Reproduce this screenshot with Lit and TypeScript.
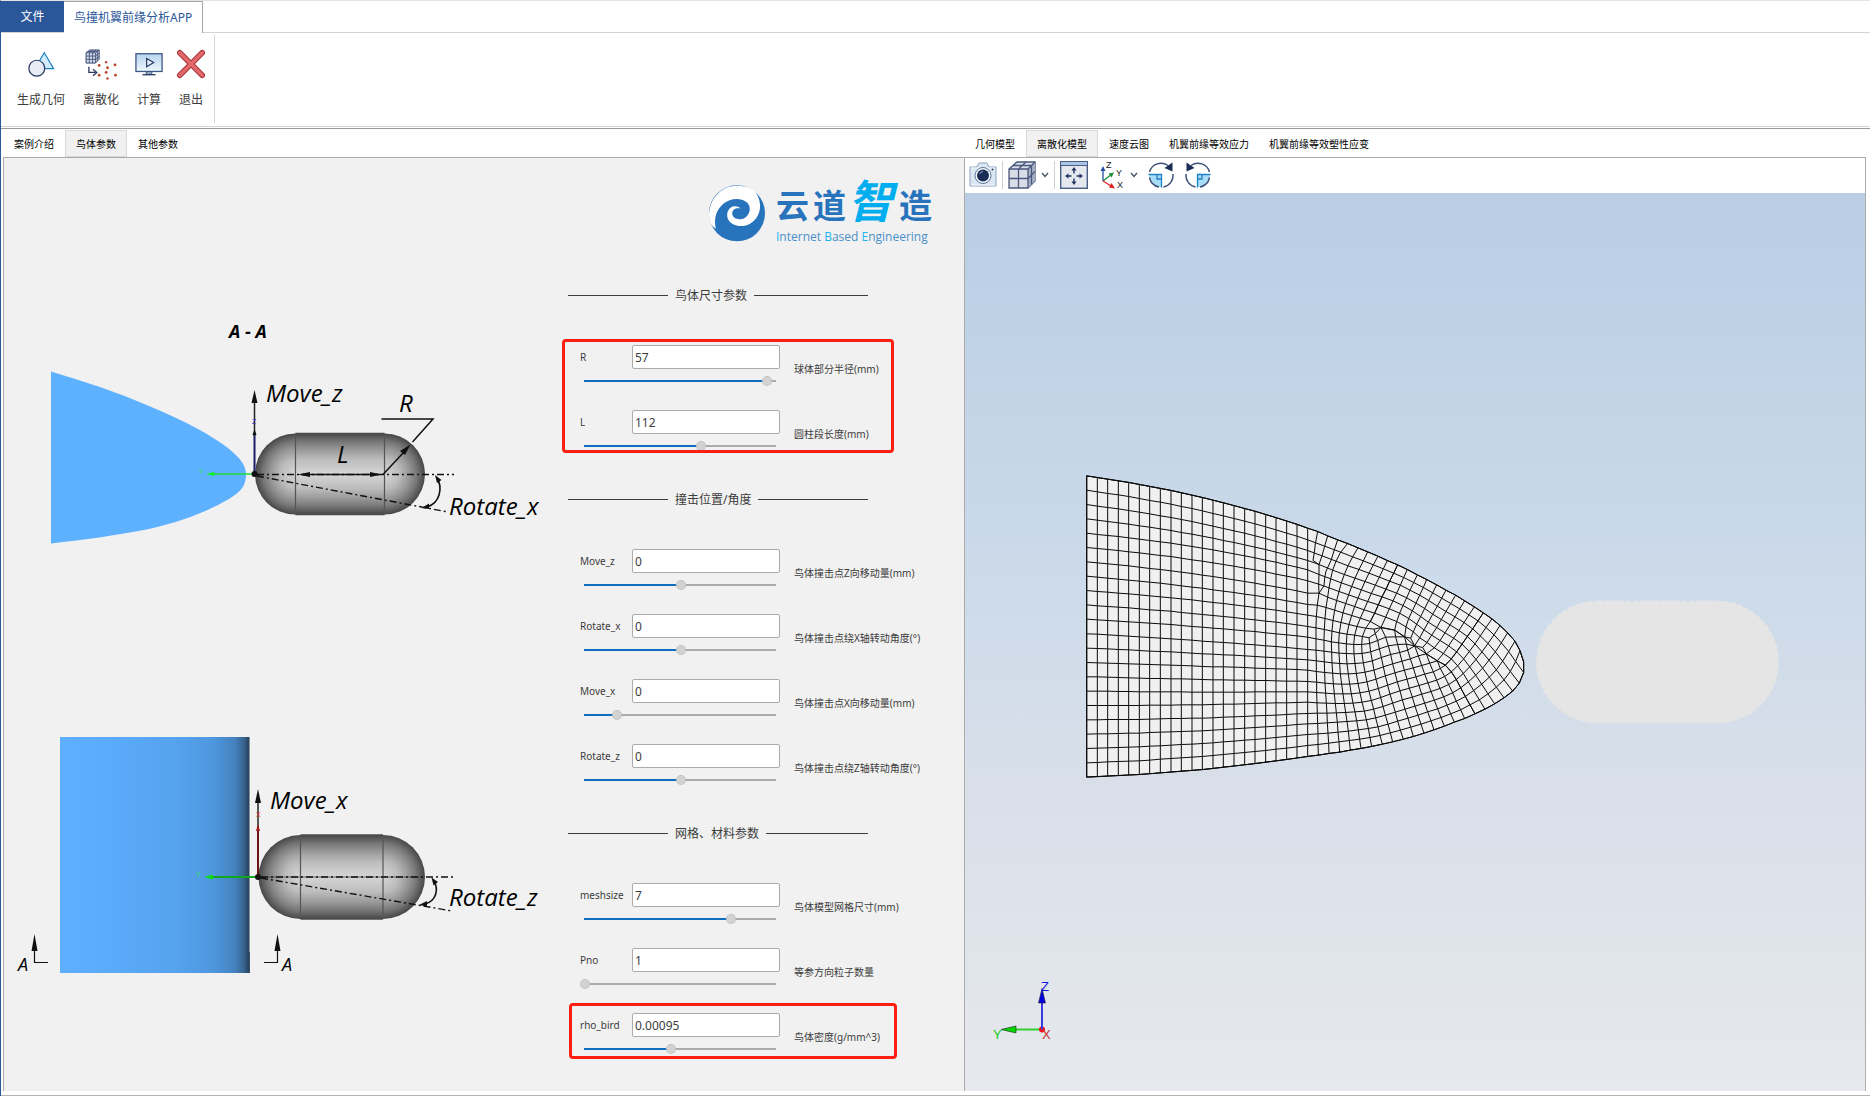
import { LitElement, html, svg, css } from "lit";
import { customElement, property, state } from "lit/decorators.js";

type Pt = [number, number];

interface Param {
  id: string;
  value: number;
  text: string;
  min: number;
  max: number;
  desc: string;
}

interface Section {
  title: string;
  marked?: boolean;
  params: Param[];
}

const SECTIONS: Section[] = [
  {
    title: "鸟体尺寸参数",
    marked: true,
    params: [
      { id: "R", value: 57, text: "57", min: 11, max: 59, desc: "球体部分半径(mm)" },
      { id: "L", value: 112, text: "112", min: 2, max: 182, desc: "圆柱段长度(mm)" },
    ],
  },
  {
    title: "撞击位置/角度",
    params: [
      { id: "Move_z", value: 0, text: "0", min: -51, max: 50, desc: "鸟体撞击点Z向移动量(mm)" },
      { id: "Rotate_x", value: 0, text: "0", min: -51, max: 50, desc: "鸟体撞击点绕X轴转动角度(°)" },
      { id: "Move_x", value: 0, text: "0", min: -20, max: 99, desc: "鸟体撞击点X向移动量(mm)" },
      { id: "Rotate_z", value: 0, text: "0", min: -51, max: 50, desc: "鸟体撞击点绕Z轴转动角度(°)" },
    ],
  },
  {
    title: "网格、材料参数",
    params: [
      { id: "meshsize", value: 7, text: "7", min: 1, max: 8.8, desc: "鸟体模型网格尺寸(mm)" },
      { id: "Pno", value: 1, text: "1", min: 1, max: 5, desc: "等参方向粒子数量" },
      { id: "rho_bird", value: 0.00095, text: "0.00095", min: 0.0005, max: 0.0015, desc: "鸟体密度(g/mm^3)" },
    ],
  },
];

/* ---------- wing mesh ---------- */

const lerp = (a: number, b: number, t: number) => a + (b - a) * t;
const mix = (a: Pt, b: Pt, t: number): Pt => [lerp(a[0], b[0], t), lerp(a[1], b[1], t)];
const divide = (a: Pt, b: Pt, n: number): Pt[] => Array.from({ length: n + 1 }, (_, i) => mix(a, b, i / n));

/** Piecewise linear lookup of y at x. */
function at(pts: Pt[], x: number): number {
  for (let i = 1; i < pts.length; i++) {
    if (x <= pts[i][0]) {
      const [x0, y0] = pts[i - 1];
      const [x1, y1] = pts[i];
      return lerp(y0, y1, (x - x0) / (x1 - x0));
    }
  }
  return pts[pts.length - 1][1];
}

const line = (pts: Pt[]) => "M" + pts.map((p) => `${Math.round(p[0])} ${Math.round(p[1])}`).join("L");

/** Both line families of a structured block, given as columns of nodes. */
function grid(cols: Pt[][]): Pt[][] {
  return [...cols, ...cols[0].map((_, r) => cols.map((c) => c[r]))];
}

const TOP_LEFT: Pt[] = [[50, 46], [178, 66], [305, 90], [402, 112], [465, 128], [558, 153], [620, 172], [683, 192], [713, 203]];
const BOTTOM_LEFT: Pt[] = [[50, 950], [210, 942], [402, 927], [558, 909], [650, 897], [713, 888]];
const SPLIT_Y = [203, 238, 270, 300, 328, 361, 398, 432, 464, 498, 530, 567, 598, 629, 663, 694, 725, 759, 790, 822, 855, 888];

const UPPER: Pt[] = [
  [713, 203], [743, 213], [773, 226], [803, 238], [833, 249], [864, 262], [893, 274], [924, 287], [952, 300], [983, 313],
  [1012, 327], [1042, 343], [1070, 357], [1100, 373], [1128, 389], [1157, 404], [1184, 421], [1213, 439], [1240, 457],
  [1266, 475], [1290, 495], [1313, 517], [1335, 542], [1350, 570], [1361, 604],
];
const LOWER: Pt[] = [
  [713, 888], [745, 884], [777, 879], [809, 875], [841, 869], [873, 864], [905, 858], [937, 851], [968, 844], [1000, 836],
  [1030, 828], [1062, 818], [1092, 808], [1123, 797], [1153, 785], [1184, 774], [1215, 760], [1245, 746], [1274, 730],
  [1302, 712], [1328, 692], [1348, 668], [1361, 636], [1361, 604],
];
const OUTLINE = line([...TOP_LEFT, ...UPPER.slice(1), ...LOWER.slice(0, -1).reverse(), ...BOTTOM_LEFT.slice().reverse()]) + "Z";

/** Mapped block between the root and the first irregular node. */
function buildRoot(): Pt[][] {
  const node = (c: number, r: number): Pt => {
    const t = c / 21;
    const x = lerp(50, 713, t);
    const f = lerp(r / 21, (SPLIT_Y[r] - 203) / 685, t);
    return [x, lerp(at(TOP_LEFT, x), at(BOTTOM_LEFT, x), f)];
  };
  return grid(Array.from({ length: 22 }, (_, c) => Array.from({ length: 22 }, (_, r) => node(c, r))));
}

const FIRST: Pt[] = [
  [773, 226], [765, 258], [757, 292], [744, 325], [743, 345], [743, 370], [743, 398], [740, 432], [740, 465], [741, 500], [741, 533],
  [741, 568], [742, 600], [742, 632], [742, 665], [743, 697], [743, 727], [743, 759], [744, 790], [744, 822], [745, 853], [745, 884],
];
const SECOND: Pt[] = [
  ...divide([983, 313], [880, 505], 8),
  [871, 527], [867, 551], [869, 578], [874, 608], [880, 638], [887, 669], [894, 699], [902, 727], [910, 753], [919, 779], [926, 804], [932, 828], [937, 851],
];

function buildTransition(): Pt[][] {
  const last = FIRST.length - 1;
  const weights = [0, 0.286, 0.433, 0.571, 0.719, 0.852, 1];
  const cols = weights.map((top, s) =>
    FIRST.map((p, k): Pt => {
      if (k === 0) return UPPER[s === 0 ? 2 : s + 3];
      if (k === last) return LOWER[s + 1];
      const w = lerp(top, s / 6, Math.min(k / 8, 1));
      const [x, y] = mix(p, SECOND[k], w);
      return [x, y + Math.sin(Math.PI * w) * (k > 8 && k < 17 ? 6 : -2)];
    })
  );
  const extra: Pt[] = [UPPER[3], ...[1, 2, 3, 4, 5].map((k) => mix(cols[0][k], cols[1][k], 0.5)), [743, 398]];
  const joins = FIRST.slice(1).map((p, k): Pt[] => [[713, SPLIT_Y[k + 1]], p]);
  return [...grid(cols), extra, [[743, 213], [736, 250], [733, 276], [729, 300], [744, 325]], ...joins];
}

const C2: Pt = [1138, 612];
const SEAM: Pt[] = [[945, 490], [974, 494], [1000, 520], [1018, 540], [1035, 557], [1054, 575], [1076, 590], [1106, 602], C2];

function buildUpper(): Pt[][] {
  const cols = [SECOND.slice(0, 8), ...SEAM.map((s, i) => divide(UPPER[10 + i], s, 7))];
  return [...grid(cols), [SECOND[8], [912, 495], SEAM[0]], [[912, 495], [915, 512]]];
}

function buildLower(): Pt[][] {
  const ends: Pt[] = [SECOND[9], [893, 530], [915, 512], SEAM[0], SEAM[1], SEAM[2], SEAM[4], SEAM[6], SEAM[7], C2];
  const counts = [12, 12, 12, 12, 12, 11, 9, 8, 7, 6];
  const cols = ends.map((e, i) =>
    i === 0
      ? SECOND.slice(9).reverse()
      : divide(LOWER[7 + i], e, counts[i]).map((p, k): Pt => [p[0] - Math.sin((Math.PI * k) / counts[i]) * (i < 5 ? 6 : 2), p[1]])
  );
  const out = cols.slice(1);
  for (let i = 0; i < cols.length - 1; i++) {
    const a = cols[i];
    const b = cols[i + 1];
    for (let r = 1; r < a.length; r++) out.push([a[r], b[Math.min(r, b.length - 1)]]);
  }
  return out;
}

/** Coons patch around the nose. */
function buildNose(): Pt[][] {
  const top = UPPER.slice(18, 25);
  const left = divide(UPPER[18], C2, 7);
  const bottom = divide(C2, LOWER[16], 6);
  const right = LOWER.slice(16, 24).reverse();
  const cols = top.map((t, i) =>
    left.map((l, j): Pt => {
      const u = i / 6;
      const v = j / 7;
      return [0, 1].map(
        (d) =>
          (1 - v) * t[d] + v * bottom[i][d] + (1 - u) * l[d] + u * right[j][d] -
          ((1 - u) * (1 - v) * top[0][d] + u * (1 - v) * top[6][d] + (1 - u) * v * bottom[0][d] + u * v * bottom[6][d])
      ) as Pt;
    })
  );
  for (let n = 0; n < 40; n++)
    for (let i = 1; i < 6; i++)
      for (let j = 1; j < 7; j++)
        cols[i][j] = [0, 1].map((d) => (cols[i - 1][j][d] + cols[i + 1][j][d] + cols[i][j - 1][d] + cols[i][j + 1][d]) / 4) as Pt;
  return grid(cols);
}

/** Joins the blocks at shared nodes and relaxes the free ones. */
function relax(lines: Pt[][]): string {
  const nodes: Pt[] = [];
  const find = (p: Pt) => {
    const i = nodes.findIndex((n) => Math.hypot(n[0] - p[0], n[1] - p[1]) < 4);
    return i >= 0 ? i : nodes.push([p[0], p[1]]) - 1;
  };
  const paths = lines.map((l) => l.map(find));
  const near = nodes.map(() => new Set<number>());
  for (const p of paths)
    for (let k = 1; k < p.length; k++)
      if (p[k] !== p[k - 1]) {
        near[p[k]].add(p[k - 1]);
        near[p[k - 1]].add(p[k]);
      }
  const edge = [...UPPER, ...LOWER];
  const fixed = nodes.map((n, i) => n[0] < 714 || near[i].size < 3 || edge.some((e) => Math.hypot(e[0] - n[0], e[1] - n[1]) < 4));
  for (let n = 0; n < 5; n++)
    nodes.forEach((p, i) => {
      if (fixed[i]) return;
      const around = [...near[i]];
      for (const d of [0, 1]) p[d] = lerp(p[d], around.reduce((s, j) => s + nodes[j][d], 0) / around.length, 0.6);
    });
  return paths.map((p) => line(p.map((i) => nodes[i]))).join("");
}

const MESH = buildRoot().map(line).join("") + relax([...buildTransition(), ...buildUpper(), ...buildLower(), ...buildNose()]);

/* ---------- ribbon icons ---------- */

const iconGeometry = html`<svg class="icon" viewBox="0 0 30 30" aria-hidden="true">
  <path d="M18.500 3 28.500 20H8.500Z" fill="#d3ecfb" stroke="#1f82c4" stroke-width="1.300" />
  <circle cx="10.500" cy="19.500" r="8.500" fill="#e9ecf4" stroke="#26375f" stroke-width="1.300" />
</svg>`;

const iconDiscrete = html`<svg class="icon" viewBox="0 0 30 30" aria-hidden="true">
  <path d="M-1 3 3 0H13V10L9 14H-1Z" fill="#d5dceb" stroke="#2a3a63" />
  <path d="M-1 3H9V14M9 3 13 0M2.500 3V14M6 3V14M-1 6.500H9L13 3.500M-1 10H9L13 7M1 1.500H11V12M2.500 3 6 0M6 3 9.500 0" fill="none" stroke="#2a3a63" stroke-width=".8" />
  <path d="M2 18V24H9M6.500 20.500 10.500 24 6.500 27.500" fill="none" stroke="#2a3a63" stroke-width="1.400" />
  <g fill="#b7452c">
    <circle cx="13" cy="16.500" r="1.500" /><circle cx="20.500" cy="13" r="1.300" /><circle cx="30" cy="16" r="1.500" />
    <circle cx="22" cy="19" r="1.500" /><circle cx="13" cy="27" r="1.500" /><circle cx="20.500" cy="24" r="1.500" />
    <circle cx="30.500" cy="27" r="1.500" /><circle cx="22" cy="30.500" r="1.300" />
  </g>
</svg>`;

const iconRun = html`<svg class="icon" viewBox="0 0 30 30" aria-hidden="true">
  <defs><linearGradient id="scr" x2="0" y2="1"><stop stop-color="#b4d5ee" /><stop offset="1" stop-color="#eff6fc" /></linearGradient></defs>
  <path d="M12 22H18V26H12Z" fill="#9fb2cc" stroke="#3c5884" />
  <rect x="1" y="4" width="28" height="19" fill="url(#scr)" stroke="#3c5884" stroke-width="1.400" />
  <path d="M12.500 9 20 13.500 12.500 18Z" fill="#e8f2fa" stroke="#26375f" stroke-width="1.300" />
  <path d="M8 26.500H22" stroke="#26375f" stroke-width="1.400" />
</svg>`;

const iconExit = html`<svg class="icon" viewBox="0 0 30 30" aria-hidden="true">
  <g fill="none" stroke-linecap="round">
    <path d="M3 3 27 27M27 3 3 27" stroke="#a83236" stroke-width="6" />
    <path d="M3 3 27 27M27 3 3 27" stroke="#e0696b" stroke-width="3.800" />
  </g>
</svg>`;

/* ---------- viewport icons ---------- */

const iconCamera = html`<svg class="tool" viewBox="0 0 28 28" aria-hidden="true">
  <path d="M1 6H8L10 2H18L20 6H27V25H1Z" fill="#dbe8f4" stroke="#8ba3c0" />
  <path d="M2 7H26M2 24H26" stroke="#f6fafd" />
  <circle cx="14" cy="14.500" r="8" fill="#f4f8fc" stroke="#5a7398" />
  <circle cx="14" cy="14.500" r="6" fill="#1b2d57" />
  <path d="M10.500 13A4 4 0 0 1 14 10.500" stroke="#8fa8cc" fill="none" />
  <circle cx="23.500" cy="8.500" r="1" fill="#26375f" />
</svg>`;

const iconCube = html`<svg class="tool" viewBox="0 0 28 28" aria-hidden="true">
  <path d="M1 8 9 1H27V20L20 27H1Z" fill="#d9dde8" stroke="#4a587c" stroke-width="1.300" />
  <path d="M20 8 27 1V20L20 27Z" fill="#a7b0c6" />
  <path d="M1 8H20V27M20 8 27 1M10.500 27V8L18 1M1 17.500H20L27 10.500M5 4.500H23.500V23.500" fill="none" stroke="#4a587c" stroke-width="1.300" />
</svg>`;

const iconFit = html`<svg class="tool" viewBox="0 0 28 28" aria-hidden="true">
  <rect x=".7" y=".7" width="26.600" height="26.600" fill="#e5e8ee" stroke="#4b5f86" stroke-width="1.400" />
  <path d="M1 1H27V4H1Z" fill="#a9c4e4" /><path d="M1 4.500H27" stroke="#4b5f86" />
  <path d="M14 8V12.500M14 17.500V22M7 15H11.500M16.500 15H21" stroke="#22335f" stroke-width="1.400" />
  <path d="M14 6 16.500 9.500H11.500ZM14 24 16.500 20.500H11.500ZM5 15 8.500 12.500V17.500ZM23 15 19.500 12.500V17.500Z" fill="#22335f" />
</svg>`;

const iconAxes = html`<svg class="tool" viewBox="0 0 28 28" aria-hidden="true">
  <path d="M6 20V8" stroke="#2b4fa8" stroke-width="1.300" /><path d="M6 5 8.500 10H3.500Z" fill="#2b4fa8" />
  <path d="M6 20 13 14.500" stroke="#1c8c3c" stroke-width="1.300" /><path d="M17 11.500 14.500 16.500 11.500 12.500Z" fill="#1c8c3c" />
  <path d="M6 20 14 25" stroke="#e01f1f" stroke-width="1.300" /><path d="M18 27.500 12 26.500 14.500 22Z" fill="#e01f1f" />
  <text class="axis-s" x="9" y="7">Z</text><text class="axis-s" x="19" y="15">Y</text><text class="axis-s" x="20" y="27">X</text>
</svg>`;

const rotateShape = svg`
  <path d="M14 14H2A12 12 0 0 0 14 26Z" fill="#a8dcf7" />
  <path d="M1.500 13.500H14.500V26.500M10 14V18H14" fill="none" stroke="#1f82c4" stroke-width="1.300" />
  <path d="M2.500 11A12 12 0 0 1 21 4.500M26 13A12 12 0 0 1 16.500 26M12 26A12 12 0 0 1 2.500 16.500" fill="none" stroke="#3f5078" stroke-width="1.400" />
  <path d="M25.500 1.500V10.500L17.500 7Z" fill="#1b2d57" />`;

const iconRotateCw = html`<svg class="tool" viewBox="0 0 28 28" aria-hidden="true">${rotateShape}</svg>`;
const iconRotateCcw = html`<svg class="tool" viewBox="0 0 28 28" aria-hidden="true"><g transform="matrix(-1 0 0 1 28 0)">${rotateShape}</g></svg>`;

const chevron = html`<svg class="chevron" viewBox="0 0 8 6" aria-hidden="true"><path d="M1 1 4 4.500 7 1" fill="none" stroke="#4a5568" stroke-width="1.400" /></svg>`;

/* ---------- parameter form ---------- */

@customElement("param-field")
export class ParamField extends LitElement {
  @property({ attribute: false }) param!: Param;
  @state() private current?: number;

  static styles = css`
    :host {
      display: grid;
      grid-template: 24px 24px / 52px 148px 1fr;
      padding: 0 0 17px 12px;
      color: #3c3c3c;
      font: 10px/16px "Noto Sans", "Noto Sans CJK SC", sans-serif;
    }
    .name { align-self: center; }
    .value {
      box-sizing: border-box;
      width: 100%;
      height: 24px;
      padding: 0 2px;
      border: 1px solid #ababab;
      border-radius: 2px;
      background: #fff;
      color: #3c3c3c;
      font: 12px/20px "Noto Sans", "Noto Sans CJK SC", sans-serif;
      outline: none;
    }
    .slider {
      grid-area: 2 / 1 / 3 / 3;
      align-self: center;
      appearance: none;
      width: 100%;
      height: 12px;
      margin: 0;
      background: linear-gradient(to right, #106ebe var(--fill), #ababab var(--fill)) no-repeat center / calc(100% - 8px) 2px;
    }
    .slider::-webkit-slider-thumb {
      appearance: none;
      width: 10px;
      height: 10px;
      border: 1px dotted #b4b4b4;
      border-radius: 50%;
      background: #d2d2d2;
      box-sizing: border-box;
    }
    .desc {
      grid-area: 1 / 3 / 3 / 4;
      align-self: center;
      padding-left: 14px;
      white-space: nowrap;
    }
  `;

  private onInput(e: Event) {
    this.current = Number((e.target as HTMLInputElement).value);
  }

  render() {
    const p = this.param;
    const v = this.current ?? p.value;
    const fill = ((v - p.min) / (p.max - p.min)) * 100;
    const text = this.current === undefined ? p.text : String(Number(v.toPrecision(3)));
    return html`
      <label class="name" for="value">${p.id}</label>
      <input class="value" id="value" type="text" .value=${text} aria-describedby="desc" />
      <span class="desc" id="desc">${p.desc}</span>
      <input class="slider" type="range" aria-label=${p.id} step="any" min=${p.min} max=${p.max} .value=${String(v)}
        style="--fill:${fill.toFixed(1)}%" @input=${this.onInput} />
    `;
  }
}

/* ---------- schematic on the parameter page ---------- */

@customElement("bird-schematic")
export class BirdSchematic extends LitElement {
  static styles = css`
    :host { display: block; }
    .drawing { display: block; width: 100%; height: auto; }
    .dim { font: italic 24px "Open Sans", "Noto Sans", sans-serif; }
    .mark { font: italic 18px "Open Sans", "Noto Sans", sans-serif; }
    .section { font: italic 700 18px "Open Sans", "Noto Sans", sans-serif; }
    .tiny { font: 7px "Liberation Sans", sans-serif; }
  `;

  private capsule(x0: number, x1: number, cy: number, r: number) {
    const a = x0 + r;
    const b = x1 - r;
    return svg`
      <rect x=${a} y=${cy - r} width=${b - a} height=${r * 2} fill="url(#tube)" />
      <path d="M${a} ${cy - r}A${r} ${r} 0 0 0 ${a} ${cy + r}Z" fill="url(#capL)" />
      <path d="M${b} ${cy - r}A${r} ${r} 0 0 1 ${b} ${cy + r}Z" fill="url(#capR)" />
      <path d="M${a} ${cy - r}H${b}M${a} ${cy + r}H${b}" stroke="#4a4a4a" stroke-width="1.500" />
      <path d="M${a} ${cy - r}V${cy + r}M${b} ${cy - r}V${cy + r}" stroke="#555" stroke-width="1.200" />`;
  }

  render() {
    const capStops = () => svg`
      <stop stop-color="#d6d6d6" /><stop offset=".36" stop-color="#bcbcbc" /><stop offset=".6" stop-color="#999" />
      <stop offset=".8" stop-color="#767676" /><stop offset="1" stop-color="#464646" />`;
    return html`<svg class="drawing" viewBox="4 158 556 850" role="img" aria-label="A - A">
      <defs>
        <linearGradient id="tube" x2="0" y2="1">
          <stop stop-color="#464646" /><stop offset=".1" stop-color="#767676" /><stop offset=".2" stop-color="#999" /><stop offset=".32" stop-color="#bcbcbc" />
          <stop offset=".5" stop-color="#d6d6d6" /><stop offset=".68" stop-color="#bcbcbc" /><stop offset=".8" stop-color="#999" /><stop offset=".9" stop-color="#767676" />
          <stop offset="1" stop-color="#464646" />
        </linearGradient>
        <radialGradient id="capL" cx="1" cy=".5" r="1" gradientTransform="translate(0 .25) scale(1 .5)">${capStops()}</radialGradient>
        <radialGradient id="capR" cx="0" cy=".5" r="1" gradientTransform="translate(0 .25) scale(1 .5)">${capStops()}</radialGradient>
        <linearGradient id="skin">
          <stop stop-color="#5eb0ff" /><stop offset=".3" stop-color="#5aaafa" /><stop offset=".6" stop-color="#56a3ee" /><stop offset=".8" stop-color="#4f98e0" />
          <stop offset=".92" stop-color="#4583c0" /><stop offset=".97" stop-color="#37658f" /><stop offset="1" stop-color="#263d55" />
        </linearGradient>
      </defs>

      <text class="section" x="229" y="338">A - A</text>
      <path d="M51 371.500C83 381 117 392 149 406C180 419 202 430 221 443C238 455 246 464 246 474C246 485 242 491 229 499C208 511 184 521 149 529C118 535 84 540 51 543.500Z" fill="#5eb1ff" />
      ${this.capsule(255, 425, 474, 40.5)}
      <path d="M254.500 434V474" stroke="#1b1b6b" stroke-width="2" />
      <path d="M254.500 396V436" stroke="#222" stroke-width="1.500" />
      <path d="M254.500 390 257.500 403H251.500ZM254.500 429 256.500 435H252.500Z" fill="#111" />
      <text class="tiny" x="252" y="424" fill="#3a3ad0">Z</text>
      <path d="M212 474H252" stroke="#1fd93a" stroke-width="1.600" /><path d="M206 474 214 472V476Z" fill="#0cf51c" />
      <text class="tiny" x="199" y="474" fill="#3be070">Y</text>
      <path d="M257 474.500H454M257 476 448 512" fill="none" stroke="#111" stroke-width="1.400" stroke-dasharray="7 3 2 3" />
      <path d="M302 474.500H378" stroke="#111" stroke-width="1.700" />
      <path d="M298 474.500 310 472V477ZM382 474.500 370 472V477Z" fill="#111" />
      <path d="M381.500 419H433L412.500 442M383 474.500 404 452" fill="none" stroke="#111" stroke-width="1.500" />
      <path d="M410.500 444.500 405 455 400 451Z" fill="#111" />
      <path d="M437 478C443 488 440 503 427 507" fill="none" stroke="#111" stroke-width="1.600" />
      <path d="M435 475 441.500 480 437 483ZM421.500 508 429 503.500V509Z" fill="#111" />
      <circle cx="254.500" cy="474" r="3" fill="#111" />
      <text class="dim" x="266" y="402">Move_z</text>
      <text class="dim" x="399" y="412">R</text>
      <text class="dim" x="337" y="463">L</text>
      <text class="dim" x="449" y="515">Rotate_x</text>

      <path d="M60 737H249.500V973H60Z" fill="url(#skin)" />
      <path d="M249.500 952V973" stroke="#3b5068" />
      ${this.capsule(258.5, 425, 877, 42)}
      <path d="M258 826V877" stroke="#6b1414" stroke-width="2" />
      <path d="M258 796V827" stroke="#222" stroke-width="1.500" />
      <path d="M258 789 261 803H255Z" fill="#111" /><path d="M258 824 260 831H256Z" fill="#a01818" />
      <text class="tiny" x="256" y="817" fill="#e23030">X</text>
      <path d="M210 877H256" stroke="#12a81e" stroke-width="2" /><path d="M204 877 213 874.500V879.500Z" fill="#0cd81c" />
      <text class="tiny" x="196" y="877" fill="#3be070">Y</text>
      <path d="M261 877H425" stroke="#444" stroke-width=".8" />
      <path d="M261 877H454M261 878 452 911" fill="none" stroke="#111" stroke-width="1.400" stroke-dasharray="7 3 2 3" />
      <path d="M434 881C439 890 436 901 425 904" fill="none" stroke="#111" stroke-width="1.600" />
      <path d="M431.500 877.500 438 882 433.500 885.500ZM419 905 427 901V906.500Z" fill="#111" />
      <circle cx="258" cy="877" r="3" fill="#111" />
      <text class="dim" x="270" y="809">Move_x</text>
      <text class="dim" x="449" y="906">Rotate_z</text>

      <path d="M34.500 950V962.500H48M277.500 950V962.500H264" fill="none" stroke="#111" stroke-width="1.200" />
      <path d="M34.500 934 37.500 951H31.500ZM277.500 934 280.500 951H274.500Z" fill="#111" />
      <text class="mark" x="18" y="971">A</text>
      <text class="mark" x="282" y="971">A</text>
    </svg>`;
  }
}

/* ---------- mesh viewport ---------- */

@customElement("mesh-view")
export class MeshView extends LitElement {
  static styles = css`
    :host {
      display: flex;
      background: linear-gradient(#b9cde4, #cddbea 45%, #d8dfe9 65%, #e6e9ed);
    }
    .scene { display: block; width: 100%; height: 100%; }
    .axis { font: 13px "Liberation Sans", sans-serif; }
  `;

  render() {
    return html`<svg class="scene" viewBox="965 193 900 897" role="img" aria-label="离散化模型">
      <defs><clipPath id="outline"><path d=${OUTLINE} /></clipPath></defs>
      <g transform="translate(1070 460) scale(.33333)" fill="none" stroke="#0a0a0a" stroke-width="3" stroke-linejoin="round">
        <path d=${OUTLINE} fill="#f0f0f0" />
        <path d=${MESH} clip-path="url(#outline)" />
        <path d=${OUTLINE} />
      </g>
      <rect x="1537" y="601" width="241" height="121" rx="61" fill="#e5e5e5" stroke="#e5e5e5" stroke-width="2" stroke-dasharray="5 2" />
      <path d="M1005 1029H1042" stroke="#2fd02f" stroke-width="2" /><path d="M1001 1029 1016 1025.500V1032.500Z" fill="#00d800" stroke="#222" stroke-width=".6" />
      <circle cx="1042" cy="1029" r="3" fill="#f01414" />
      <path d="M1042 1029V1000" stroke="#3a3ae0" stroke-width="2" /><path d="M1042 988 1045.500 1002.500H1038.500Z" fill="#0000e0" stroke="#222" stroke-width=".6" />
      <text class="axis" x="1041" y="990" fill="#1414e0">Z</text>
      <text class="axis" x="993" y="1038" fill="#14c814">Y</text>
      <text class="axis" x="1042" y="1038" fill="#c83232">X</text>
    </svg>`;
  }
}

/* ---------- application ---------- */

@customElement("app-root")
export class AppRoot extends LitElement {
  static styles = css`
    :host {
      display: flex;
      flex-direction: column;
      box-sizing: border-box;
      min-height: 100vh;
      border-left: 1px solid #2b579a;
      border-top: 1px solid #e3e3e3;
      background: #fff;
      color: #3c3c3c;
      font: 12px/18px "Noto Sans", "Noto Sans CJK SC", sans-serif;
    }
    button {
      border: 0;
      padding: 0;
      background: none;
      color: inherit;
      font: inherit;
    }
    .menu {
      display: flex;
      height: 32px;
      box-sizing: border-box;
      border-bottom: 1px solid #d4d4d4;
    }
    .menu .file { width: 63px; background: #2b579a; color: #fff; }
    .menu .page {
      padding: 0 10px;
      margin-bottom: -1px;
      border: solid #a6a6a6;
      border-width: 1px 1px 0 0;
      background: #fff;
      color: #2b579a;
    }
    .ribbon {
      display: flex;
      align-items: flex-start;
      height: 93px;
      padding-left: 7px;
      border-bottom: 1px solid #d4d4d4;
    }
    .group {
      display: flex;
      height: 88px;
      margin-top: 2px;
      padding-right: 2px;
      border-right: 1px solid #d4d4d4;
    }
    .action {
      display: flex;
      flex-direction: column;
      align-items: center;
      gap: 13px;
      padding: 15px 9px 0;
    }
    .icon { width: 28px; height: 28px; margin: 0 -2px; overflow: visible; }
    .main {
      flex: 1;
      display: grid;
      grid-template-columns: 961fr 902fr;
      margin-top: 1px;
      padding: 1px 4px 4px 2px;
      border-top: 1px solid #999;
      border-bottom: 1px solid #b4b4b4;
    }
    .pane { display: flex; flex-direction: column; min-width: 0; }
    .tabs {
      display: flex;
      align-items: stretch;
      height: 27px;
      padding-left: 1px;
      border-bottom: 1px solid #ababab;
      color: #000;
      font-size: 10px;
      line-height: 16px;
    }
    .tab { padding: 0 10px; white-space: nowrap; }
    .tab.active { margin: 0 1px; border: 1px solid #d9d9d9; background: #f1f1f1; }
    .sheet {
      flex: 1;
      display: flex;
      align-items: flex-start;
      border-left: 1px solid #ababab;
      background: #f1f1f1;
    }
    .schematic { flex: 0 0 556px; }
    .side { flex: 1; display: flex; flex-direction: column; min-width: 0; }
    .logo { align-self: flex-end; width: 240px; height: 89px; margin: 2px 19px 0 0; overflow: visible; }
    .logo-cn { font: 700 33px "Noto Sans CJK SC", sans-serif; }
    .logo-zhi { font: italic 700 45px "Noto Sans CJK SC", sans-serif; }
    .logo-en { font: 12px "Open Sans", "Noto Sans", sans-serif; }
    .form { display: flex; flex-direction: column; gap: 15px; padding: 37px 0 0 8px; }
    .section { position: relative; }
    .heading {
      display: flex;
      align-items: center;
      gap: 7px;
      width: 300px;
      height: 19px;
      margin: 0 0 40px;
      font-size: 12px;
      line-height: 19px;
      font-weight: 400;
      white-space: nowrap;
    }
    .heading::before, .heading::after { content: ""; height: 1px; background: #3c3c3c; }
    .heading::before { width: 100px; }
    .heading::after { flex: 1; }
    .frame {
      position: absolute;
      box-sizing: border-box;
      border: 3px solid #ff1f12;
      border-radius: 4px;
      pointer-events: none;
    }
    .frame.size { left: -6px; top: 53px; width: 332px; height: 114px; }
    .frame.density { left: 1px; bottom: 19px; width: 328px; height: 56px; }
    .view { flex: 1; display: flex; flex-direction: column; border: solid #ababab; border-width: 0 1px; }
    .toolbar { display: flex; align-items: center; height: 33px; padding: 0 0 2px 4px; }
    .tool { display: block; width: 28px; height: 28px; }
    .axis-s { font: 9px "Liberation Sans", sans-serif; fill: #222; }
    .chevron { display: block; width: 8px; height: 6px; }
    .rule { width: 1px; height: 28px; margin: 0 5px; background: #d0d0d0; }
    .drop { padding: 8px 0 8px 5px; }
    .spin { margin-left: 9px; }
    .canvas { flex: 1; min-height: 0; }
  `;

  private tabs(names: string[], active: number) {
    return html`<nav class="tabs" role="tablist">
      ${names.map((n, i) => html`<button class="tab ${i === active ? "active" : ""}" role="tab" aria-selected=${i === active}>${n}</button>`)}
    </nav>`;
  }

  render() {
    return html`
      <header>
        <nav class="menu">
          <button class="file">文件</button>
          <button class="page">鸟撞机翼前缘分析APP</button>
        </nav>
        <div class="ribbon">
          <div class="group">
            <button class="action">${iconGeometry}<span>生成几何</span></button>
            <button class="action">${iconDiscrete}<span>离散化</span></button>
            <button class="action">${iconRun}<span>计算</span></button>
            <button class="action">${iconExit}<span>退出</span></button>
          </div>
        </div>
      </header>
      <main class="main">
        <section class="pane">
          ${this.tabs(["案例介绍", "鸟体参数", "其他参数"], 1)}
          <div class="sheet">
            <bird-schematic class="schematic"></bird-schematic>
            <div class="side">
              <svg class="logo" viewBox="705 160 240 89" role="img" aria-label="云道智造">
                <g transform="translate(690 160) scale(.33333)">
                  <circle cx="141" cy="160" r="84" fill="#2874bc" />
                  <path d="M58 176C52 125 88 77 141 77C165 77 183 84 196 95C212 118 215 146 203 167C190 192 165 201 143 197C118 193 107 173 113 155C120 138 140 134 152 146C137 141 125 149 127 163C130 178 151 182 165 173C181 162 184 141 172 128C157 113 122 112 100 131C79 149 70 177 78 206C66 199 60 188 58 176Z" fill="#fff" />
                  <path d="M152 146C160 156 150 170 137 166C142 162 143 152 138 147Z" fill="#2874bc" />
                </g>
                <g fill="#2874bc">
                  <text class="logo-cn" x="776" y="218">云</text>
                  <text class="logo-cn" x="813" y="218">道</text>
                  <text class="logo-cn" x="899" y="218">造</text>
                </g>
                <text class="logo-zhi" x="848" y="218" fill="#00aeef">智</text>
                <text class="logo-en" x="776" y="241" fill="#4a90c8"><tspan fill="#1fb4f0">I</tspan>nternet <tspan fill="#1fb4f0">B</tspan>ased <tspan fill="#1fb4f0">E</tspan>ngineering</text>
              </svg>
              <form class="form" @submit=${(e: Event) => e.preventDefault()}>
                ${SECTIONS.map(
                  (s, i) => html`<section class="section">
                    <h2 class="heading">${s.title}</h2>
                    ${s.params.map((p) => html`<param-field .param=${p}></param-field>`)}
                    ${s.marked ? html`<div class="frame size"></div>` : ""}
                    ${i === 2 ? html`<div class="frame density"></div>` : ""}
                  </section>`
                )}
              </form>
            </div>
          </div>
        </section>
        <section class="pane">
          ${this.tabs(["几何模型", "离散化模型", "速度云图", "机翼前缘等效应力", "机翼前缘等效塑性应变"], 1)}
          <div class="view">
            <div class="toolbar">
              <button aria-label="截图">${iconCamera}</button>
              <span class="rule"></span>
              <button aria-label="视图">${iconCube}</button>
              <button class="drop" aria-label="视图选项">${chevron}</button>
              <span class="rule"></span>
              <button aria-label="适应窗口">${iconFit}</button>
              <button class="spin" aria-label="坐标轴">${iconAxes}</button>
              <button class="drop" aria-label="坐标轴选项">${chevron}</button>
              <button class="spin" aria-label="顺时针旋转">${iconRotateCw}</button>
              <button class="spin" aria-label="逆时针旋转">${iconRotateCcw}</button>
            </div>
            <mesh-view class="canvas"></mesh-view>
          </div>
        </section>
      </main>
    `;
  }
}
